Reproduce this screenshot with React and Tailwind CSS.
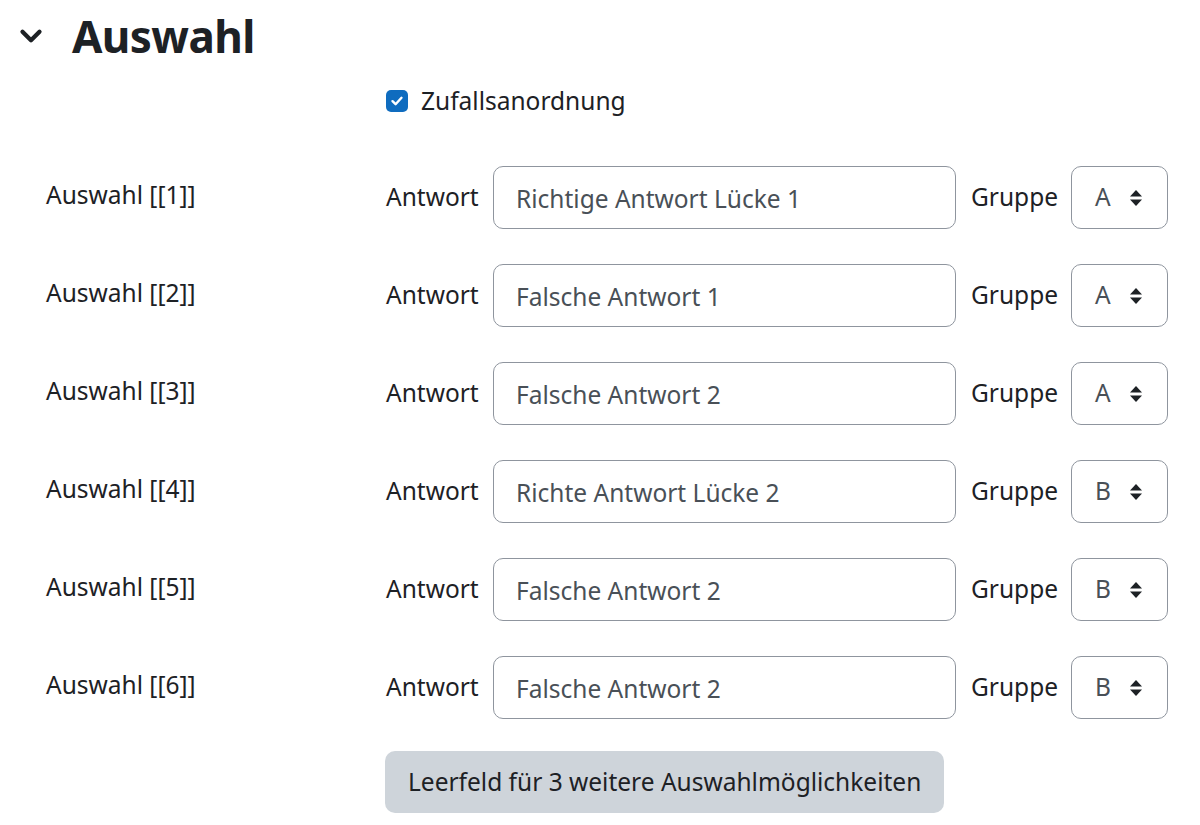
import { ChevronDown } from "lucide-react";

const rows = [
  { n: 1, answer: "Richtige Antwort Lücke 1", group: "A" },
  { n: 2, answer: "Falsche Antwort 1", group: "A" },
  { n: 3, answer: "Falsche Antwort 2", group: "A" },
  { n: 4, answer: "Richte Antwort Lücke 2", group: "B" },
  { n: 5, answer: "Falsche Antwort 2", group: "B" },
  { n: 6, answer: "Falsche Antwort 2", group: "B" },
];

function SortIcon() {
  return (
    <svg width="14" height="18" viewBox="0 0 14 18" className="fill-[#1d2125]">
      <path d="M7 1 L13 7.5 H1 Z" />
      <path d="M7 17 L13 10.5 H1 Z" />
    </svg>
  );
}

export default function App() {
  return (
    <div
      className="w-[1200px] h-[825px] bg-white text-[#1d2125] overflow-hidden"
      style={{ fontFamily: '"Noto Sans", "Open Sans", sans-serif' }}
    >
      {/* section header */}
      <div className="flex items-center h-[72px] pl-[14px]">
        <ChevronDown size={34} strokeWidth={3} className="text-[#1d2125]" />
        <h2 className="ml-[24px] text-[44px] font-bold leading-none tracking-[-0.6px]">Auswahl</h2>
      </div>

      {/* shuffle */}
      <div className="flex items-center pl-[386px] mt-[16px] h-[26px]">
        <span className="w-[22px] h-[22px] rounded-[5px] bg-[#0f6cbf] flex items-center justify-center">
          <svg width="14" height="14" viewBox="0 0 14 14">
            <path d="M2.5 7.2 L5.6 10.2 L11.5 3.8" stroke="white" strokeWidth="2.4" fill="none" strokeLinecap="round" strokeLinejoin="round" />
          </svg>
        </span>
        <span className="ml-[13px] text-[24.5px]">Zufallsanordnung</span>
      </div>

      {/* choices */}
      <div className="mt-[52px] flex flex-col gap-[35px]">
        {rows.map((r) => (
          <div key={r.n} className="flex items-center h-[63px]">
            <div className="w-[386px] pl-[46px] text-[24.5px] -mt-[5px]">Auswahl [[{r.n}]]</div>
            <span className="w-[92px] text-[24.5px] whitespace-nowrap">Antwort</span>
            <div className="ml-[15px] w-[463px] h-[63px] border border-[#8f959e] rounded-[10px] flex items-center px-[22px] pt-[3px] text-[24.5px] text-[#495057]">
              {r.answer}
            </div>
            <span className="ml-[15px] w-[86px] text-[24.5px]">Gruppe</span>
            <div className="ml-[14px] w-[97px] h-[63px] border border-[#8f959e] rounded-[10px] flex items-center justify-between pl-[23px] pr-[24px] text-[24.5px] text-[#495057]">
              <span>{r.group}</span>
              <SortIcon />
            </div>
          </div>
        ))}
      </div>

      {/* add blanks */}
      <div className="pl-[385px] mt-[32px]">
        <button className="h-[62px] px-[23px] rounded-[10px] bg-[#ced4da] text-[24.5px] text-[#1d2125]">
          Leerfeld für 3 weitere Auswahlmöglichkeiten
        </button>
      </div>
    </div>
  );
}
